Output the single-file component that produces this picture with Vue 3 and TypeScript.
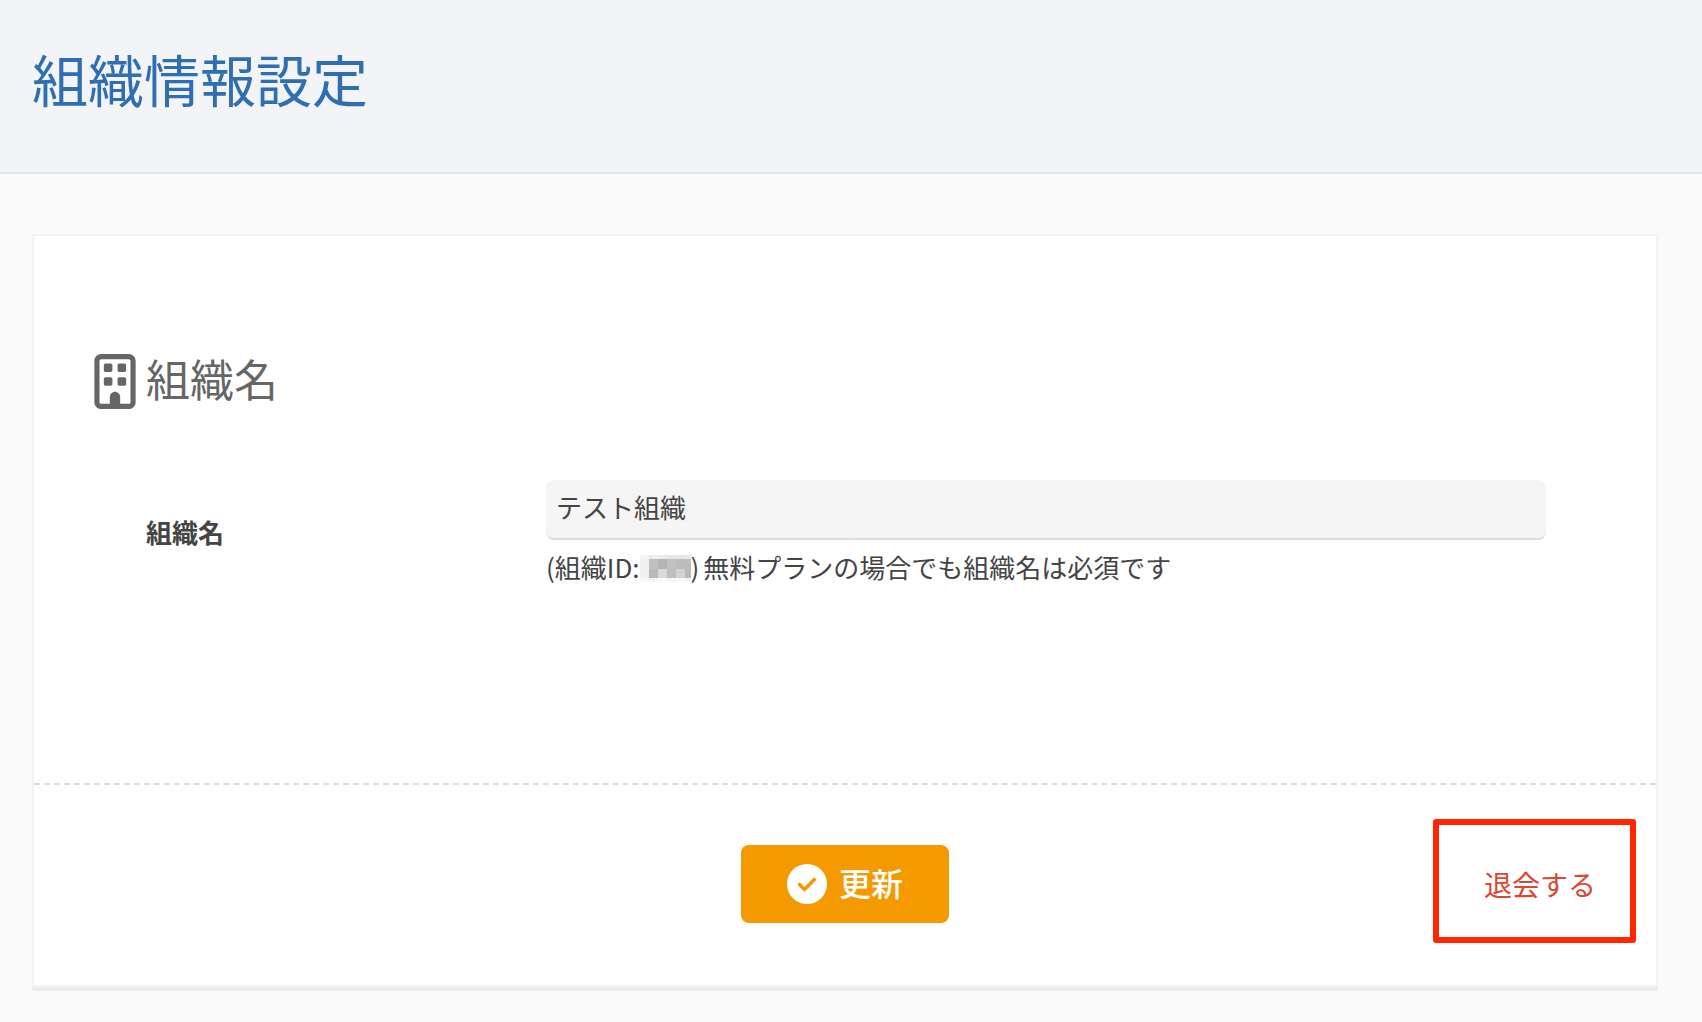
<script setup lang="ts">
import { ref } from 'vue'

const organizationName = ref('テスト組織')

// Shades of the pixelated organization ID, one row of cells per line.
const maskRows: { y: number; height: number; shades: string[] }[] = [
  { y: 0, height: 4, shades: ['#f4f4f4', '#ededed', '#ebebeb', '#e6e6e6', '#e6e6e6', '#e9e9e9'] },
  { y: 4, height: 10, shades: ['#f0f0f0', '#c0c0c0', '#b4b4b4', '#c2c2c2', '#bcbcbc', '#bdbdbd'] },
  { y: 14, height: 9, shades: ['#f1f1f1', '#b9b9b9', '#d9d9d9', '#bebebe', '#d2d2d2', '#b8b8b8'] },
  { y: 23, height: 4, shades: ['#f7f7f7', '#f4f4f4', '#f9f9f9', '#f5f5f5', '#f7f7f7', '#f4f4f4'] },
]
</script>

<template>
  <div class="page">
    <header class="page-header">
      <h1>組織情報設定</h1>
    </header>

    <main class="content">
      <form class="card" @submit.prevent>
        <section class="card-body">
          <h2>
            <svg class="building" viewBox="0 0 384 512" aria-hidden="true">
              <path
                fill="currentColor"
                d="M64 48c-8.800 0-16 7.200-16 16v384c0 8.800 7.200 16 16 16h80v-64c0-26.500 21.500-48 48-48s48 21.500 48 48v64h80c8.800 0 16-7.200 16-16V64c0-8.800-7.200-16-16-16H64zM0 64C0 28.700 28.700 0 64 0h256c35.300 0 64 28.700 64 64v384c0 35.300-28.700 64-64 64H64c-35.300 0-64-28.700-64-64V64zm88 40c0-8.800 7.200-16 16-16h48c8.800 0 16 7.200 16 16v48c0 8.800-7.200 16-16 16h-48c-8.800 0-16-7.200-16-16v-48zm144-16h48c8.800 0 16 7.200 16 16v48c0 8.800-7.200 16-16 16h-48c-8.800 0-16-7.200-16-16v-48c0-8.800 7.200-16 16-16zM88 232c0-8.800 7.200-16 16-16h48c8.800 0 16 7.200 16 16v48c0 8.800-7.200 16-16 16h-48c-8.800 0-16-7.200-16-16v-48zm144-16h48c8.800 0 16 7.200 16 16v48c0 8.800-7.200 16-16 16h-48c-8.800 0-16-7.200-16-16v-48c0-8.800 7.200-16 16-16z"
              />
            </svg>
            <span>組織名</span>
          </h2>

          <div class="field-row">
            <label for="organization-name">組織名</label>
            <div class="field">
              <input id="organization-name" v-model="organizationName" type="text" />
              <p class="hint">
                <span>(組織ID:</span>
                <svg class="mask" viewBox="0 0 51 27" shape-rendering="crispEdges" aria-hidden="true">
                  <g v-for="row in maskRows" :key="row.y">
                    <rect
                      v-for="(shade, i) in row.shades"
                      :key="i"
                      :x="i * 9"
                      :y="row.y"
                      width="9"
                      :height="row.height"
                      :fill="shade"
                    />
                  </g>
                </svg>
                <span>)</span>
                <span class="note">無料プランの場合でも組織名は必須です</span>
              </p>
            </div>
          </div>
        </section>

        <footer class="card-footer">
          <button type="submit">
            <svg class="check" viewBox="0 0 40 40" aria-hidden="true">
              <circle cx="20" cy="20" r="20" fill="#fff" />
              <path
                d="M12.500 20.500l5 5 9.800-10"
                fill="none"
                stroke="#f59900"
                stroke-width="3.600"
                stroke-linecap="round"
                stroke-linejoin="round"
              />
            </svg>
            <span>更新</span>
          </button>
          <a class="withdraw" href="#">退会する</a>
        </footer>
      </form>
    </main>
  </div>
</template>

<style>
body {
  background: #fafafa;
}
</style>

<style scoped>
.page {
  color: #444;
  font-family: "Noto Sans CJK JP", sans-serif;
  font-size: 26px;
  line-height: 40px;
}

.page-header {
  padding: 38px 32px 54px;
  background: #f2f4f8;
  border-bottom: 2px solid #d8e4f0;
}

h1 {
  margin: 0;
  color: #2f6eb0;
  font-size: 56px;
  font-weight: 400;
  line-height: 80px;
}

.content {
  padding: 60px 44px 35px 32px;
}

.card {
  background: #fff;
  border: 2px solid #f3f3f3;
  box-shadow: 0 4px 0 #ebebeb;
}

.card-body {
  padding: 112px 110px 196px 60px;
}

h2 {
  display: flex;
  align-items: center;
  gap: 10px;
  margin: 0 0 66px;
  color: #666;
  font-size: 44px;
  font-weight: 400;
  line-height: 60px;
}

h2 span {
  padding-bottom: 6px;
}

.building {
  width: 42px;
  height: 55px;
}

.field-row {
  display: flex;
  align-items: center;
  padding-left: 52px;
}

label {
  flex: 0 0 400px;
  padding-bottom: 4px;
  font-weight: 700;
}

.field {
  flex: 1;
  min-width: 0;
}

input {
  display: block;
  box-sizing: border-box;
  width: 100%;
  height: 60px;
  padding: 0 10px 6px;
  color: inherit;
  font: inherit;
  background: #f5f5f5;
  border: 0;
  border-bottom: 2px solid #dcdcdc;
  border-radius: 8px;
  outline: 0;
}

.hint {
  display: flex;
  align-items: center;
  margin: 7px 0 0;
}

.note {
  margin-left: 4px;
}

.mask {
  width: 51px;
  height: 27px;
  margin-top: 2px;
}

.card-footer {
  display: grid;
  grid-template-columns: 1fr auto 1fr;
  align-items: center;
  padding: 34px 20px 42px;
  border-top: 2px dashed #dcdcdc;
}

button {
  grid-column: 2;
  display: flex;
  align-items: center;
  gap: 12px;
  height: 78px;
  margin-top: 6px;
  padding: 0 46px;
  color: #fff;
  font: inherit;
  font-size: 32px;
  font-weight: 500;
  background: #f59900;
  border: 0;
  border-radius: 8px;
}

button span {
  padding-bottom: 4px;
}

.check {
  width: 40px;
  height: 40px;
}

.withdraw {
  justify-self: end;
  padding: 39px 34px 33px 45px;
  color: #dc4632;
  font-size: 28px;
  text-decoration: none;
  border: 6px solid #ff2600;
  border-radius: 3px;
}
</style>
